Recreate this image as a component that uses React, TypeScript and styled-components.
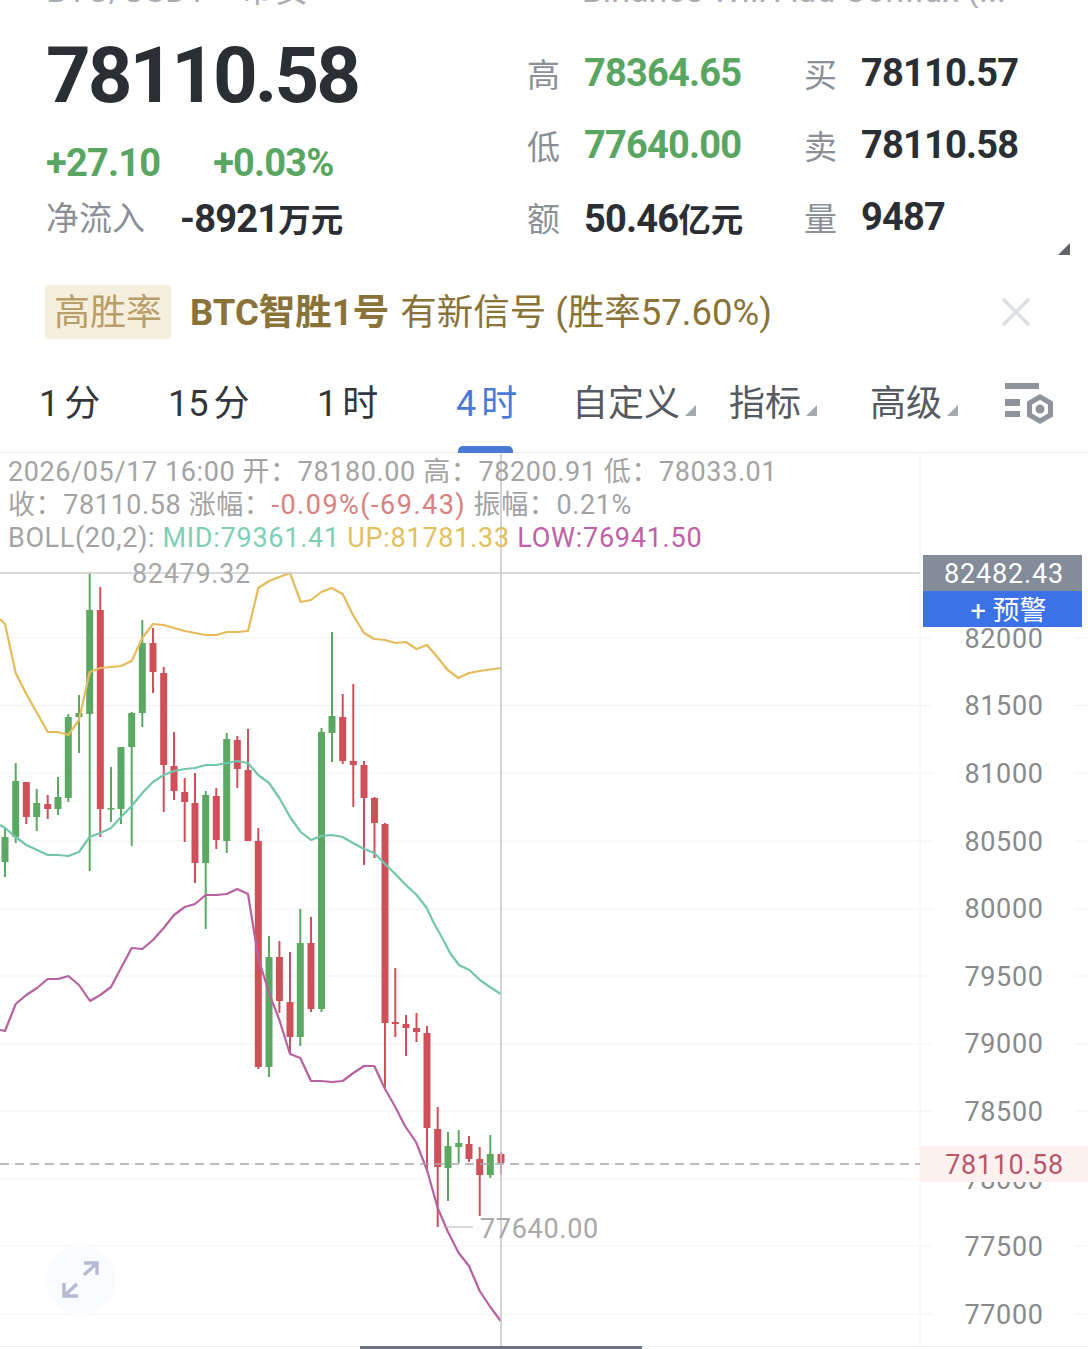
import React from "react";
import styled, { createGlobalStyle } from "styled-components";

const Global = createGlobalStyle`
  html, body { margin: 0; padding: 0; background: #fff; }
  * { box-sizing: border-box; }
`;

const FONT = `Roboto, "Noto Sans CJK SC", sans-serif`;
const COLON = "\uFF1A";

const Page = styled.div`
  width: 1088px;
  height: 1349px;
  overflow: hidden;
  background: #fff;
  font-family: ${FONT};
  display: flex;
  flex-direction: column;
`;

const TopStrip = styled.div`
  height: 8px;
  overflow: hidden;
  display: flex;
  justify-content: space-between;
  padding: 0 82px 0 46px;
  color: #a9adb3;
  font-size: 34px;
  line-height: 8px;
`;
const TopText = styled.span`
  display: block;
  margin-top: -14px;
  white-space: pre;
`;

const Quote = styled.section`
  position: relative;
  height: 270px;
  display: flex;
  padding-left: 46px;
`;
const PriceColumn = styled.div`
  width: 481px;
  display: flex;
  flex-direction: column;
`;
const BigPrice = styled.div`
  font-size: 78px;
  font-weight: 700;
  letter-spacing: -3px;
  line-height: 90px;
  margin-top: 23px;
  color: #2b2e33;
`;
const ChangeRow = styled.div`
  display: flex;
  gap: 53px;
  margin-top: 14px;
  line-height: 56px;
  height: 56px;
`;
const Figure = styled.span<{ $tone?: "green" | "dark" }>`
  font-size: 38px;
  font-weight: 700;
  letter-spacing: -0.8px;
  white-space: nowrap;
  color: ${(p) => (p.$tone === "green" ? "#58a662" : "#2b2e33")};
`;
const Unit = styled.span`
  font-size: 32.5px;
  letter-spacing: 0;
`;
const InflowRow = styled.div`
  display: flex;
  gap: 35px;
  line-height: 56px;
  height: 56px;
`;
const Label = styled.span`
  font-size: 33px;
  color: #8b9097;
  white-space: nowrap;
`;
const Stats = styled.div`
  display: grid;
  grid-template-columns: 57px 220px 57px auto;
  grid-auto-rows: 72px;
  align-items: center;
  margin-top: 29px;
  align-self: flex-start;
`;
const Corner = styled.div`
  position: absolute;
  right: 18px;
  top: 235px;
  width: 0;
  height: 0;
  border-left: 12px solid transparent;
  border-bottom: 12px solid #5f646b;
`;

const SignalBar = styled.section`
  height: 54px;
  margin-top: 7px;
  display: flex;
  align-items: center;
  padding-left: 45px;
  position: relative;
  color: #8a7339;
  font-size: 36.5px;
`;
const SignalTag = styled.span`
  width: 126px;
  height: 54px;
  background: #f6efde;
  color: #b89f6a;
  font-size: 36px;
  display: flex;
  align-items: center;
  justify-content: center;
  padding-bottom: 6px;
  margin-right: 19px;
`;
const SignalName = styled.span`
  font-weight: 700;
  margin-right: 11px;
  padding-bottom: 6px;
`;
const SignalText = styled.span`
  white-space: nowrap;
  padding-bottom: 6px;
`;
const CloseIcon = styled.svg`
  position: absolute;
  left: 1001px;
  top: 12px;
`;

const TabBar = styled.nav`
  height: 114px;
  display: grid;
  grid-template-columns: 129px 149px 139px 116px 157px 141px 135px auto;
  padding-left: 39px;
  align-items: center;
  border-bottom: 1px solid #eeeeee;
  position: relative;
`;
const Tab = styled.div<{ $active?: boolean; $caret?: boolean }>`
  position: relative;
  font-size: 36px;
  line-height: 46px;
  margin-top: 16px;
  word-spacing: -4px;
  white-space: nowrap;
  color: ${(p) => (p.$active ? "#4a7bd4" : "#33373c")};
  ${(p) => (p.$caret ? "color: #555a60;" : "")}
`;
const Caret = styled.i`
  display: inline-block;
  width: 0;
  height: 0;
  margin-left: 5px;
  border-left: 11px solid transparent;
  border-bottom: 11px solid #a5a8ac;
`;
const ActiveMark = styled.div`
  position: absolute;
  left: 458px;
  bottom: -1px;
  width: 55px;
  height: 7px;
  background: #4a7bd4;
  border-radius: 5px 5px 0 0;
`;

const Chart = styled.section`
  position: relative;
  flex: 1;
  font-size: 27px;
`;
const Plot = styled.svg`
  position: absolute;
  inset: 0;
`;
const InfoBlock = styled.div`
  position: relative;
  padding: 3px 0 0 8px;
  line-height: 33px;
  color: #a3a3a3;
  letter-spacing: 0.6px;
  white-space: nowrap;
`;
const Tint = styled.span<{ $c: string; $s?: number }>`
  color: ${(p) => p.$c};
  letter-spacing: ${(p) => p.$s ?? 0.75}px;
`;
const Note = styled.span<{ $x: number; $y: number }>`
  position: absolute;
  left: ${(p) => p.$x}px;
  top: ${(p) => p.$y}px;
  line-height: 32px;
  color: #a8a8a8;
  letter-spacing: 0.7px;
`;
const Axis = styled.div`
  position: absolute;
  left: 920px;
  top: 152px;
  width: 168px;
  display: flex;
  flex-direction: column;
  color: #8a8a8a;
  letter-spacing: 0.6px;
`;
const Tick = styled.div`
  height: 67.6px;
  display: flex;
  align-items: center;
  justify-content: center;
`;
const CrossTag = styled.div`
  position: absolute;
  left: 923px;
  top: 102px;
  width: 159px;
  color: #fff;
  text-align: center;
`;
const CrossPrice = styled.div`
  height: 36px;
  line-height: 38px;
  padding-left: 3px;
  background: #858c99;
  letter-spacing: 0.85px;
`;
const CrossAlert = styled.div`
  height: 36px;
  line-height: 40px;
  padding-left: 12px;
  background: #3b72e8;
`;
const LastTag = styled.div`
  position: absolute;
  left: 920px;
  top: 693px;
  width: 168px;
  height: 36px;
  line-height: 38px;
  padding-left: 1px;
  background: #fdf1f0;
  color: #b8566a;
  text-align: center;
  letter-spacing: 0.65px;
`;
const Expand = styled.div`
  position: absolute;
  left: 46px;
  top: 792px;
  width: 70px;
  height: 70px;
  border-radius: 50%;
  background: #fafbfe;
  display: flex;
  align-items: center;
  justify-content: center;
`;
const HomeBar = styled.div`
  position: absolute;
  left: 360px;
  bottom: 0;
  width: 282px;
  height: 3px;
  background: #6b7280;
`;

type C = [number, number, number, number, number, number];
const candles: C[] = [
  [5, 1, 829, 837, 862, 877], [15.7, 1, 763, 781, 837, 843], [26.3, 0, 782, 782, 817, 824],
  [36.7, 1, 789, 803, 817, 831], [47.7, 0, 795, 804, 809, 819], [58, 1, 777, 797, 809, 815],
  [68.3, 1, 714, 717, 798, 802], [79, 1, 695, 713, 717, 753], [89.7, 1, 573, 610, 714, 871],
  [100.3, 0, 587, 610, 809, 837], [111, 1, 767, 808, 809, 822], [121, 1, 747, 747, 809, 824],
  [131.7, 1, 712, 713, 747, 846], [142.3, 1, 620, 643, 713, 727], [153, 0, 628, 643, 672, 693],
  [163.7, 0, 667, 673, 765, 812], [174, 0, 732, 766, 791, 800], [184.7, 0, 778, 792, 802, 842],
  [195, 0, 773, 803, 863, 883], [205.7, 1, 791, 795, 863, 929], [216.3, 0, 788, 796, 840, 849],
  [226.7, 1, 733, 739, 841, 853], [237.3, 0, 736, 740, 769, 788], [248, 0, 729, 770, 841, 841],
  [258.3, 0, 828, 841, 1067, 1069], [269, 1, 936, 957, 1067, 1077], [279.4, 0, 941, 957, 1001, 1013],
  [290, 0, 952, 1002, 1037, 1053], [300.3, 1, 909, 943, 1037, 1046], [311, 0, 917, 943, 1009, 1012],
  [321.5, 1, 728, 732, 1009, 1012], [332, 1, 632, 716, 733, 762], [342.7, 0, 694, 717, 761, 764],
  [353.3, 0, 684, 761, 765, 807], [364, 0, 761, 765, 798, 865], [374.5, 0, 797, 798, 823, 858],
  [385, 0, 823, 824, 1023, 1088], [395.3, 0, 968, 1022, 1024, 1037], [406, 0, 1015, 1024, 1028, 1056],
  [416.5, 0, 1013, 1028, 1032, 1042], [427, 0, 1026, 1033, 1128, 1170], [437.7, 0, 1107, 1129, 1167, 1227],
  [448, 1, 1132, 1146, 1168, 1201], [458.7, 1, 1130, 1143, 1147, 1163], [469, 0, 1136, 1144, 1159, 1162],
  [479.7, 0, 1147, 1159, 1175, 1216], [490.3, 1, 1135, 1154, 1175, 1178], [501, 0, 1152, 1154, 1163, 1174],
];

const up =
  "0,619 5,624 15.7,673 26.3,694 37,713 47.7,732 58,732 68.3,735 79,720 89.7,672 100.3,668 111,667 121,666 131.7,661 142.3,638 153,624 163.7,625 174,628 184.7,631 195,633 205.7,635 216.3,635 226.7,632 237.3,632 248,631 258.3,588 269,581 279.4,577 290,573 300.7,602 311,600 321.3,592 331.7,588 342.7,594 353,615 364,633 374.3,639 385,640 395.3,643 406,642 416.5,649 427,645 437.3,657 447.7,670 458.3,678 469,673 479.7,671 501,668";
const mid =
  "0,825 5,828 15.7,837 26.3,845 37,850 47.7,855 58,855 68.3,856 79,852 89.7,837 100.3,833 111,828 121,817 131.7,806 142.3,793 153,782 163.7,775 174,771 184.7,769 195,768 205.7,765 216.3,765 226.7,763 237.3,761 248,763 258.3,775 269,783 279.4,798 290,817 300.7,832 311,840 321.3,836 331.7,835 342.7,837 353,843 364,849 374.3,853 385,864 395.3,874 406,885 416.7,895 426.7,908 433.3,922 443.3,940 450,953 459,965 469.3,970 480,980 490,987 500.7,994";
const low =
  "0,1030 5,1031 15.7,1004 26.3,995 37,988 47.7,979 58,979 68.3,976 79,985 90,1001 100.3,995 111,987 121,968 131.7,948 142.3,949 153,940 163.7,928 174,915 184.7,907 195,904 205.7,895 216.3,895 226.7,894 237.3,889 248,894 258.3,958 269,993 279.4,1020 290,1054 300.3,1058 311,1081 321.3,1081 331.7,1082 342.7,1081 353.3,1073 364,1066 374.3,1066 385,1089 395.3,1107 405,1126 416,1142 427,1170 437.7,1208 448,1232 458.7,1253 469,1266 479.7,1291 490.3,1307 500.7,1321";

const gridYs = [638, 705.5, 773, 841, 909, 976, 1044, 1111, 1179, 1246, 1314];
const ticks = [82000, 81500, 81000, 80500, 80000, 79500, 79000, 78500, 78000, 77500, 77000];
const GREEN = "#5aa862";
const RED = "#cf5058";

const Chartlines = () => (
  <Plot width={1088} height={896} viewBox="0 453 1088 896">
    {gridYs.map((y) => (
      <g key={y} stroke="#f2f2f2" strokeWidth={1}>
        <line x1={0} x2={932} y1={y} y2={y} />
        <line x1={1075} x2={1088} y1={y} y2={y} />
      </g>
    ))}
    <line x1={920} x2={920} y1={455} y2={1346} stroke="#f2f2f2" />
    <line x1={0} x2={1088} y1={1346.5} y2={1346.5} stroke="#eeeeee" />
    {candles.map(([x, g, wt, bt, bb, wb]) => {
      const color = g ? GREEN : RED;
      return (
        <g key={x}>
          <line x1={x} x2={x} y1={wt} y2={wb} stroke={color} strokeWidth={2} />
          <rect x={x - 3.5} y={bt} width={7} height={Math.max(bb - bt, 1.5)} fill={color} />
        </g>
      );
    })}
    <polyline points={up} fill="none" stroke="#e5bb5b" strokeWidth={2.2} strokeLinejoin="round" />
    <polyline points={mid} fill="none" stroke="#72c6ae" strokeWidth={2.2} strokeLinejoin="round" />
    <polyline points={low} fill="none" stroke="#b861a0" strokeWidth={2.2} strokeLinejoin="round" />
    <line x1={0} x2={920} y1={573} y2={573} stroke="#cccccc" strokeWidth={1.5} />
    <line x1={501} x2={501} y1={454} y2={1346} stroke="#c4c4c4" strokeWidth={1.5} />
    <line x1={0} x2={920} y1={1164} y2={1164} stroke="#a8a8a8" strokeWidth={1.6} strokeDasharray="9 6" />
    <line x1={443} x2={473} y1={1227} y2={1227} stroke="#b5b5b5" />
  </Plot>
);

export default function App() {
  return (
    <Page>
      <Global />
      <TopStrip>
        <TopText>BTC/USDT  · 币安</TopText>
        <TopText>Binance Will Add Conflux (...</TopText>
      </TopStrip>
      <Quote>
        <PriceColumn>
          <BigPrice>78110.58</BigPrice>
          <ChangeRow>
            <Figure $tone="green">+27.10</Figure>
            <Figure $tone="green">+0.03%</Figure>
          </ChangeRow>
          <InflowRow>
            <Label>净流入</Label>
            <Figure>-8921<Unit>万元</Unit></Figure>
          </InflowRow>
        </PriceColumn>
        <Stats>
          <Label>高</Label>
          <Figure $tone="green">78364.65</Figure>
          <Label>买</Label>
          <Figure>78110.57</Figure>
          <Label>低</Label>
          <Figure $tone="green">77640.00</Figure>
          <Label>卖</Label>
          <Figure>78110.58</Figure>
          <Label>额</Label>
          <Figure>50.46<Unit>亿元</Unit></Figure>
          <Label>量</Label>
          <Figure>9487</Figure>
        </Stats>
        <Corner />
      </Quote>
      <SignalBar>
        <SignalTag>高胜率</SignalTag>
        <SignalName>BTC智胜1号</SignalName>
        <SignalText>有新信号 (胜率57.60%)</SignalText>
        <CloseIcon width={30} height={30} viewBox="0 0 30 30">
          <path d="M2 2 L28 28 M28 2 L2 28" stroke="#dcdfe2" strokeWidth={3.4} fill="none" />
        </CloseIcon>
      </SignalBar>
      <TabBar>
        <Tab>1 分</Tab>
        <Tab>15 分</Tab>
        <Tab>1 时</Tab>
        <Tab $active>4 时</Tab>
        <Tab $caret>自定义<Caret /></Tab>
        <Tab $caret>指标<Caret /></Tab>
        <Tab $caret>高级<Caret /></Tab>
        <Tab>
          <svg width={50} height={44} viewBox="0 0 50 44" style={{ display: "block" }}>
            <path d="M0 1h34v6H0zM0 17h15v7H0zM0 29h15v6H0z" fill="#8f949c" />
            <path d="M35 15l10.5 6v12L35 39l-10.5-6V21z" fill="none" stroke="#8f949c" strokeWidth={5} />
            <circle cx={35} cy={27} r={4.5} fill="#8f949c" />
          </svg>
        </Tab>
        <ActiveMark />
      </TabBar>
      <Chart>
        <Chartlines />
        <InfoBlock>
          <div>2026/05/17 16:00 开{COLON}78180.00 高{COLON}78200.91 低{COLON}78033.01</div>
          <div>
            收{COLON}78110.58 涨幅{COLON}<Tint $c="#d98080" $s={1.5}>-0.09%(-69.43)</Tint> 振幅{COLON}0.21%
          </div>
          <div>
            BOLL(20,2): <Tint $c="#7fcfb4">MID:79361.41</Tint> <Tint $c="#e2c060">UP:81781.33</Tint>{" "}
            <Tint $c="#c060a8">LOW:76941.50</Tint>
          </div>
        </InfoBlock>
        <Note $x={132} $y={105}>82479.32</Note>
        <Note $x={480} $y={760}>77640.00</Note>
        <Axis>
          {ticks.map((t) => (
            <Tick key={t}>{t}</Tick>
          ))}
        </Axis>
        <CrossTag>
          <CrossPrice>82482.43</CrossPrice>
          <CrossAlert>+ 预警</CrossAlert>
        </CrossTag>
        <LastTag>78110.58</LastTag>
        <Expand>
          <svg width={40} height={40} viewBox="0 0 40 40" fill="none" stroke="#b4bbd2" strokeWidth={3.4}>
            <path d="M23 3h13v12M35 4L23 15M3 23v13h14M4 35l12-11" />
          </svg>
        </Expand>
        <HomeBar />
      </Chart>
    </Page>
  );
}
